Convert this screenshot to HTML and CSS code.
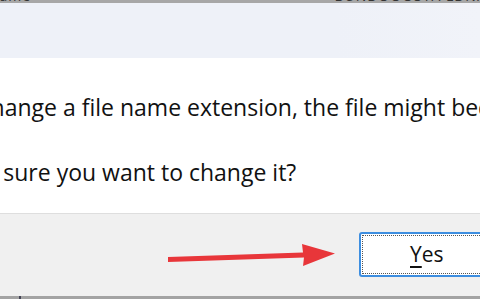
FILE: index.html
```html
<!DOCTYPE html>
<html>
<head>
<meta charset="utf-8">
<link rel="stylesheet" href="styles.css">
</head>
<body>
<div class="page">
  <div class="topstrip"><span class="ghost left">Name</span><span class="ghost right">BUNDOOOSTA LDNX</span></div>
  <div class="titlebar"></div>
  <div class="content">
    <p class="line l1">If you change a file name extension, the file might become unusable.</p>
    <p class="line l2">Are you sure you want to change it?</p>
  </div>
  <div class="footer">
    <svg class="arrow" width="172" height="26" viewBox="0 0 172 26">
      <polygon fill="#e8363a" points="2,13 2,18 138,13.5 137,22 169,9.5 136,0 137,8.5"/>
    </svg>
    <button class="btn"><span class="focus"><span class="u">Y</span>es</span></button>
  </div>
  <div class="bottomstrip"><span class="mark"></span></div>
</div>
</body>
</html>
```

FILE: styles.css
```css
html, body {
  margin: 0;
  padding: 0;
}
body {
  width: 480px;
  height: 300px;
  overflow: hidden;
  font-family: "Open Sans", "Noto Sans", sans-serif;
  color: #111;
}
.page {
  width: 480px;
  height: 300px;
  display: flex;
  flex-direction: column;
  overflow: hidden;
}
.topstrip {
  height: 3px;
  background: #a7a7a7;
  overflow: hidden;
  display: flex;
  justify-content: space-between;
  flex-shrink: 0;
}
.ghost {
  font-size: 14px;
  line-height: 14px;
  margin-top: -11px;
  color: #333;
  letter-spacing: 1px;
}
.ghost.left { margin-left: -12px; }
.ghost.right { margin-right: -6px; }
.titlebar {
  height: 55px;
  background: linear-gradient(90deg, #eef1f8 0%, #eef1f8 70%, #f1f3f9 100%);
  flex-shrink: 0;
}
.content {
  height: 155px;
  background: #fff;
  flex-shrink: 0;
  overflow: hidden;
  padding-top: 33px;
  box-sizing: border-box;
}
.line {
  margin: 0;
  font-size: 23px;
  line-height: 32px;
  white-space: nowrap;
}
.l1 {
  margin-left: -86px;
}
.l2 {
  margin-top: 33px;
  margin-left: -85px;
}
.footer {
  height: 83px;
  border-top: 1px solid #dedede;
  background: #f0f0f0;
  flex-shrink: 0;
  display: flex;
  align-items: flex-start;
  box-sizing: border-box;
}
.arrow {
  margin-left: 166px;
  margin-top: 30px;
  flex-shrink: 0;
}
.btn {
  margin-left: 21px;
  margin-top: 18px;
  width: 140px;
  height: 45px;
  flex-shrink: 0;
  background: #fff;
  border: 2px solid #3d8ee0;
  border-radius: 3px;
  padding: 1px;
  font-family: inherit;
  font-size: 21px;
  color: #111;
  display: flex;
}
.focus {
  flex: 1;
  border: 1px dotted #555;
  display: flex;
  align-items: center;
  padding-left: 47px;
  line-height: 1;
}
.u { text-decoration: underline; text-underline-offset: 4px; }
.bottomstrip {
  height: 3px;
  background: #a3a3a3;
  flex-shrink: 0;
}
.mark {
  display: block;
  width: 2px;
  height: 3px;
  margin-left: 19px;
  background: #445;
}
```
